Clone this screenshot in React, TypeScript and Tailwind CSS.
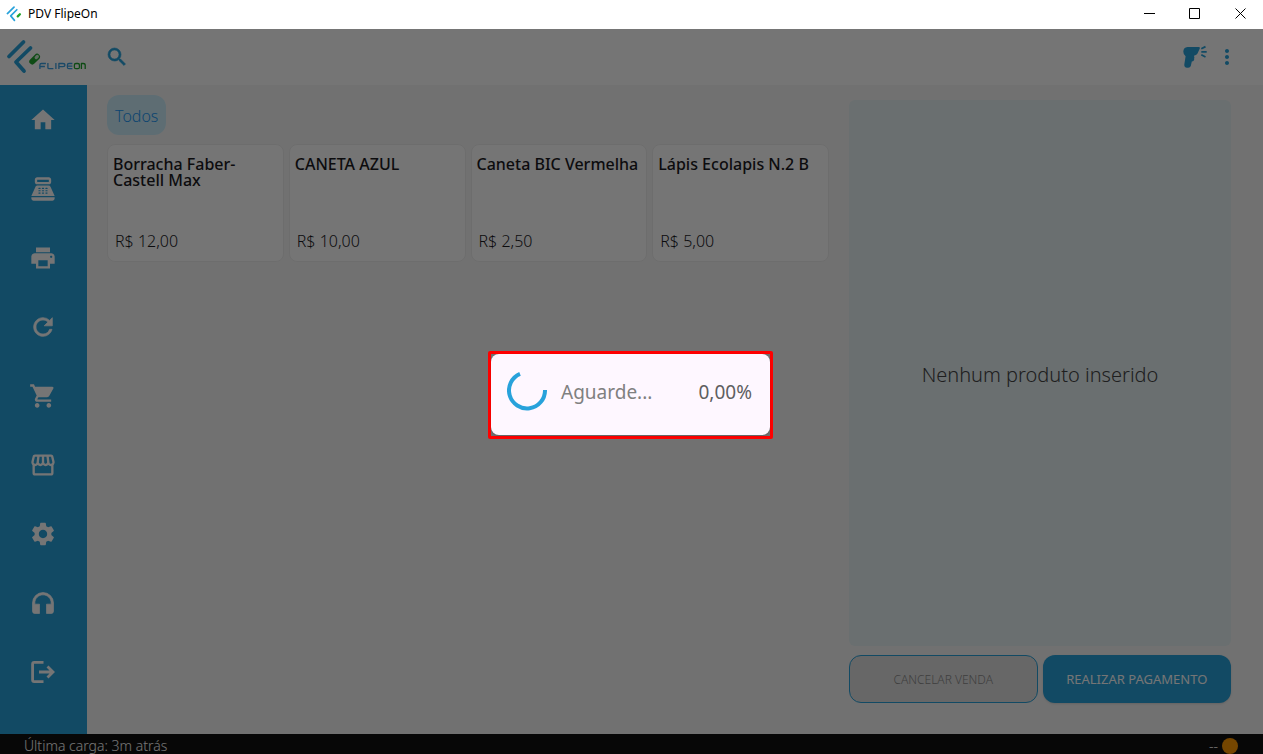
import type { ReactNode } from 'react'
import { MdHome, MdMoreVert, MdPointOfSale, MdPrint, MdSettings, MdShoppingCart, MdStorefront } from 'react-icons/md'

// Heavier variants of the plain material shapes
const paths = {
  search:
    'M15.5 14h-.79l-.28-.27A6.471 6.471 0 0 0 16 9.5 6.5 6.5 0 1 0 9.5 16c1.61 0 3.09-.59 4.23-1.57l.27.28v.79l5 4.99L20.49 19l-4.99-5zm-6 0C7.01 14 5 11.99 5 9.5S7.01 5 9.5 5 14 7.01 14 9.5 11.99 14 9.5 14z',
  refresh:
    'M17.65 6.35A7.958 7.958 0 0 0 12 4c-4.42 0-7.99 3.58-7.99 8s3.57 8 7.99 8c3.73 0 6.84-2.55 7.73-6h-2.08A5.99 5.99 0 0 1 12 18c-3.31 0-6-2.69-6-6s2.69-6 6-6c1.66 0 3.14.69 4.22 1.78L13 11h7V4l-2.35 2.35z',
  headphones:
    'M12 3a9 9 0 0 0-9 9v7c0 1.1.9 2 2 2h4v-8H5v-1c0-3.87 3.13-7 7-7s7 3.13 7 7v1h-4v8h4c1.1 0 2-.9 2-2v-7a9 9 0 0 0-9-9z',
}

function BoldIcon({ path, className }: { path: string; className: string }) {
  return (
    <svg viewBox="0 0 24 24" className={className} fill="currentColor" aria-hidden="true">
      <path d={path} stroke="currentColor" strokeWidth=".6" strokeLinejoin="round" />
    </svg>
  )
}

function LogoutIcon() {
  return (
    <svg viewBox="0 0 28 28" className="size-7" fill="none" stroke="currentColor" strokeWidth="2.8" aria-hidden="true">
      <path d="M14.5 4.4H5.2q-1.6 0-1.6 1.6v16q0 1.6 1.6 1.6h9.3" />
      <path d="M10 14h14M18.500 8.500 24 14 18.500 19.500" />
    </svg>
  )
}

const menu: { label: string; icon: ReactNode }[] = [
  { label: 'Início', icon: <MdHome className="size-7" /> },
  { label: 'Caixa', icon: <MdPointOfSale className="size-7" /> },
  { label: 'Imprimir', icon: <MdPrint className="size-7" /> },
  { label: 'Atualizar', icon: <BoldIcon path={paths.refresh} className="size-7" /> },
  { label: 'Vendas', icon: <MdShoppingCart className="size-7" /> },
  { label: 'Loja', icon: <MdStorefront className="size-7" /> },
  { label: 'Configurações', icon: <MdSettings className="size-7" /> },
  { label: 'Suporte', icon: <BoldIcon path={paths.headphones} className="size-7" /> },
  { label: 'Sair', icon: <LogoutIcon /> },
]

const products = [
  { name: 'Borracha Faber-Castell Max', price: 'R$ 12,00' },
  { name: 'CANETA AZUL', price: 'R$ 10,00' },
  { name: 'Caneta BIC Vermelha', price: 'R$ 2,50' },
  { name: 'Lápis Ecolapis N.2 B', price: 'R$ 5,00' },
]

function LogoMark({ className }: { className: string }) {
  return (
    <svg viewBox="0 0 34 34" className={className} fill="none" aria-hidden="true">
      <g stroke="#28a2db" strokeWidth="3.6" strokeLinecap="round" strokeLinejoin="round">
        <path d="M3 16 17 2.5" />
        <path d="M23 8 10 21 18 30.5" />
      </g>
      <path d="M25 22 29.5 17.5" stroke="#1fa32d" strokeWidth="5" strokeLinecap="round" />
    </svg>
  )
}

function TitleBar() {
  return (
    <div className="flex h-[29px] shrink-0 items-center justify-between bg-white pb-0.5 pl-1.5">
      <div className="flex items-center gap-1.5">
        <LogoMark className="size-4" />
        <span className="text-xs text-black">PDV FlipeOn</span>
      </div>
      <div className="flex text-black">
        <button aria-label="Minimizar" className="flex w-[46px] justify-center">
          <svg viewBox="0 0 11 11" className="size-[11px]" stroke="currentColor" fill="none">
            <path d="M0 5.500h11" />
          </svg>
        </button>
        <button aria-label="Maximizar" className="flex w-[45px] justify-center">
          <svg viewBox="0 0 11 11" className="size-[11px]" stroke="currentColor" fill="none">
            <path d="M.5 .5h10v10h-10z" />
          </svg>
        </button>
        <button aria-label="Fechar" className="flex w-[46px] justify-center">
          <svg viewBox="0 0 11 11" className="size-[11px]" stroke="currentColor" fill="none">
            <path d="M.5 .5l10 10M10.5 .5l-10 10" />
          </svg>
        </button>
      </div>
    </div>
  )
}

function Brand() {
  return (
    <svg viewBox="0 0 80 36" className="h-9 w-20" fill="none" role="img" aria-label="FlipeOn">
      <g stroke="#28a2db" strokeWidth="3.8" strokeLinecap="round" strokeLinejoin="round">
        <path d="M3 17.5 17.5 3" />
        <path d="M24.5 9 10 23 18 32" />
      </g>
      <path d="M26.3 22.500 31 17.800" stroke="#1fa32d" strokeWidth="6" strokeLinecap="round" />
      <path d="M30.2 18.600 31.300 17.500" stroke="#d4f0d6" strokeWidth="3.2" strokeLinecap="round" />
      <g strokeWidth="1.3" strokeLinejoin="round" transform="translate(.4 -1.500)">
        <g stroke="#3c9fe0">
          <path d="M33.5 31.5v-4q0-1.500 1.500-1.500h4.500M33.500 29h5" />
          <path d="M41.5 25.500v4.500q0 1.200 1.200 1.200h4.300" />
          <path d="M49.5 25.500v6" />
          <path d="M52.5 31.500v-5.500h4q2 0 2 1.600t-2 1.600h-4" />
          <path d="M66 26h-3.500q-1.500 0-1.500 1.500v2.200q0 1.500 1.500 1.500h3.500M61 28.600h5" />
        </g>
        <g stroke="#1fa32d">
          <rect x="68" y="26" width="5" height="5.2" rx="1.5" />
          <path d="M75 31.500v-5.500h1.800q2 0 2 1.800v3.700" />
        </g>
      </g>
    </svg>
  )
}

function ScannerIcon() {
  return (
    <svg viewBox="0 0 24 24" className="size-6" fill="#28a2db" aria-hidden="true">
      <path d="M4.5 2H16q1.3.2.8 1.600l-2.300 5q-.6 1.400-2.200 1.600l-1 .3q-.4.6-.1 1.300.5 1-.1 1.700.4 1-.3 1.900-.6 1-2 1L7.800 21q-.6 1.800-2.600 1.800H4Q1 22.500 1.300 19.500L2.600 11.200Q.3 9.800.3 6.500.5 2.300 4.500 2z" />
      <path d="M18.3 3.800 22.500 1.600M18.300 6.800h5.400M18.300 9.800l4.200 2.200" stroke="#28a2db" strokeWidth="1.8" />
    </svg>
  )
}

function Header() {
  return (
    <header className="flex h-14 shrink-0 items-center justify-between bg-white pr-6 pl-1.5 text-[#28a2db]">
      <div className="flex items-center gap-[19px]">
        <Brand />
        <button aria-label="Pesquisar">
          <BoldIcon path={paths.search} className="size-6" />
        </button>
      </div>
      <div className="flex items-center gap-2">
        <button aria-label="Leitor de código de barras">
          <ScannerIcon />
        </button>
        <button aria-label="Mais opções">
          <MdMoreVert className="size-6" />
        </button>
      </div>
    </header>
  )
}

function Sidebar() {
  return (
    <nav className="flex w-[87px] shrink-0 flex-col bg-[#28a2db] pr-px text-white">
      {menu.map(({ label, icon }) => (
        <button key={label} aria-label={label} className="flex h-[69px] items-center justify-center">
          {icon}
        </button>
      ))}
    </nav>
  )
}

function ProductCard({ name, price }: { name: string; price: string }) {
  return (
    <button className="flex h-[118px] flex-col justify-between rounded-lg border border-[#eee] bg-white px-1 pt-[11px] pb-2 text-left text-base text-[#1c1b1f]">
      <span className="px-px leading-4 font-medium">{name}</span>
      <span className="px-[3px] font-light">{price}</span>
    </button>
  )
}

function Cart() {
  return (
    <aside className="flex w-[382px] shrink-0 flex-col gap-[9px] pt-[15px]">
      <div className="flex flex-1 items-center justify-center rounded-md bg-[#e6f1f4] pt-1 text-xl font-light text-[#444]">
        Nenhum produto inserido
      </div>
      <div className="grid grid-cols-2 gap-[5px]">
        <button className="h-12 rounded-xl border border-[#28a2db] bg-[#e0e0e0] pt-0.5 text-xs font-light text-[#8a8a8a]">
          CANCELAR VENDA
        </button>
        <button className="h-12 rounded-xl bg-[#28a2db] pt-0.5 text-[13px] text-white shadow">
          REALIZAR PAGAMENTO
        </button>
      </div>
    </aside>
  )
}

function LoadingDialog() {
  return (
    <div className="absolute inset-0 flex items-center justify-center bg-black/54 pt-1.5 pr-0.5">
      <div className="rounded-xs border-3 border-[#ff0000] pb-px">
        <div
          role="dialog"
          aria-label="Aguarde"
          className="flex h-[81px] w-[279px] items-center rounded-lg bg-[#fef7ff] px-4 pb-1.5 text-[19px] shadow"
        >
          <svg viewBox="0 0 40 40" className="size-10 shrink-0" fill="none" aria-hidden="true">
            <path d="M38 19A18 18 0 1 1 13 2.8" stroke="#28a2db" strokeWidth="4" />
          </svg>
          <span className="ml-3.5 flex-1 pt-0.5 text-[#808080]">Aguarde...</span>
          <span className="pt-0.5 pr-0.5 text-[#5f5f5f]">0,00%</span>
        </div>
      </div>
    </div>
  )
}

export default function App() {
  return (
    <div className="flex h-screen flex-col overflow-hidden font-['Noto_Sans',sans-serif]">
      <TitleBar />
      <div className="relative flex min-h-0 flex-1 flex-col">
        <Header />
        <div className="flex min-h-0 flex-1 bg-[#f7f7f7]">
          <Sidebar />
          <main className="flex flex-1 gap-5 pr-8 pb-[31px] pl-5">
            <section className="flex-1 pt-2.5">
              <button className="h-10 rounded-xl bg-[#cdeefb] px-2 pt-0.5 text-base font-light text-[#2196f3]">
                Todos
              </button>
              <div className="mt-[9px] grid grid-cols-4 gap-[5px]">
                {products.map((product) => (
                  <ProductCard key={product.name} {...product} />
                ))}
              </div>
            </section>
            <Cart />
          </main>
        </div>
        <footer className="flex shrink-0 justify-between bg-[#111] px-6 pt-1 text-sm leading-4 font-light text-white">
          <span>Última carga: 3m atrás</span>
          <span className="flex items-center gap-1 pr-px">
            --
            <span className="size-4 rounded-full bg-[#ff9800]" />
          </span>
        </footer>
        <LoadingDialog />
      </div>
    </div>
  )
}
